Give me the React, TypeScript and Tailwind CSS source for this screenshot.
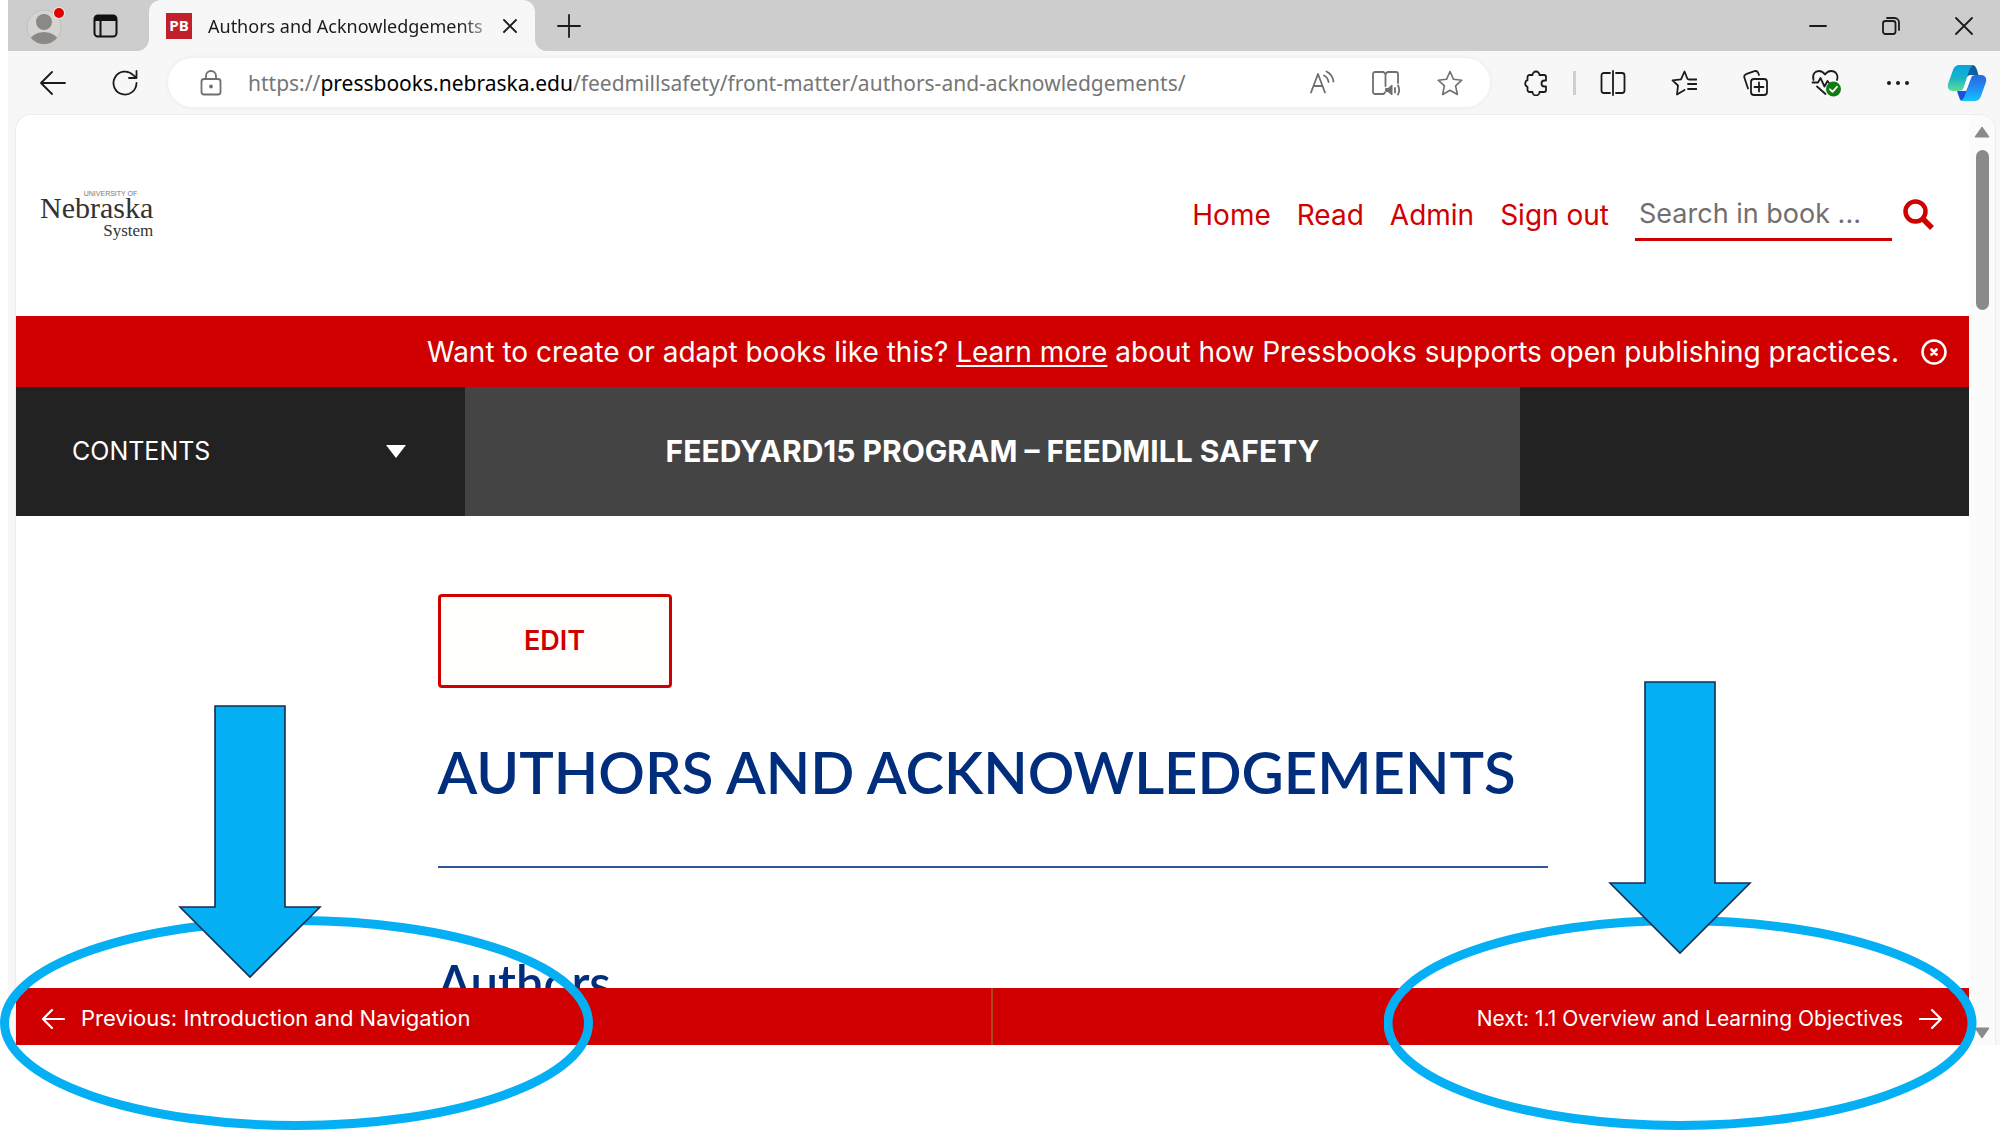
import React from 'react';

type IconProps = { children: React.ReactNode; className?: string; viewBox?: string };

function Icon({ children, className = 'h-[26px] w-[26px]', viewBox = '0 0 26 26' }: IconProps) {
  return (
    <svg
      viewBox={viewBox}
      className={className}
      fill="none"
      stroke="currentColor"
      strokeWidth="1.8"
      strokeLinecap="round"
      strokeLinejoin="round"
      aria-hidden="true"
    >
      {children}
    </svg>
  );
}

function IconButton({ label, className = '', children }: { label: string; className?: string; children: React.ReactNode }) {
  return (
    <button type="button" aria-label={label} className={`flex shrink-0 items-center justify-center ${className}`}>
      {children}
    </button>
  );
}

function TabStrip() {
  return (
    <div className="flex h-[51px] shrink-0 bg-[#f7f7f7] text-[#1b1b1b]">
      <div className="flex w-[141px] shrink-0 items-center gap-7 rounded-br-xl bg-[#cdcdcd] pl-[18px]">
        <button type="button" aria-label="Profile">
          <svg viewBox="0 0 39 38" className="h-[38px] w-[39px]" aria-hidden="true">
            <defs>
              <clipPath id="avatar">
                <circle cx="18" cy="20" r="17" />
              </clipPath>
            </defs>
            <circle cx="18" cy="20" r="17" fill="#d6d4d0" stroke="#c2c0bc" />
            <g clipPath="url(#avatar)" fill="#8b8886">
              <circle cx="18" cy="15" r="8" />
              <ellipse cx="18" cy="34" rx="14" ry="9" />
            </g>
            <circle cx="33" cy="6" r="6" fill="#f0e6e6" />
            <circle cx="33" cy="6" r="5" fill="#e00000" />
          </svg>
        </button>
        <button type="button" aria-label="Tab actions">
          <svg viewBox="0 0 25 24" className="h-6 w-[25px]" fill="none" stroke="#111" strokeWidth="2" aria-hidden="true">
            <rect x="1.5" y="1.5" width="22" height="21" rx="3.5" />
            <path d="M7.500 7v15" />
            <path d="M2 4.500h21" strokeWidth="5" />
          </svg>
        </button>
      </div>
      <div className="flex w-[386px] shrink-0 items-center bg-[#cdcdcd]">
        <div className="flex h-full w-full items-center rounded-t-xl bg-[#f7f7f7] pr-[18px] pl-[17px]">
          <span className="flex h-[26px] w-[26px] shrink-0 items-center justify-center bg-[#c0202b] font-['Open_Sans',sans-serif] text-[15px] font-bold text-white">
            PB
          </span>
          <span className="ml-4 w-[280px] shrink-0 overflow-hidden bg-linear-to-r from-[#1b1b1b] from-90% to-[#b8b8b8] bg-clip-text font-['Noto_Sans',sans-serif] text-[18px] leading-[26px] whitespace-nowrap text-transparent">
            Authors and Acknowledgements
          </span>
          <IconButton label="Close tab" className="ml-auto">
            <Icon className="h-[14px] w-[14px]" viewBox="0 0 14 14">
              <path d="M1 1l12 12M13 1L1 13" />
            </Icon>
          </IconButton>
        </div>
      </div>
      <div className="flex flex-1 items-center rounded-bl-xl bg-[#cdcdcd] pl-[22px]">
        <IconButton label="New tab">
          <Icon className="h-6 w-6" viewBox="0 0 24 24">
            <path d="M12 1v22M1 12h22" />
          </Icon>
        </IconButton>
        <div className="ml-auto flex">
          <IconButton label="Minimize" className="w-[73px]">
            <Icon className="h-[18px] w-[18px]" viewBox="0 0 18 18">
              <path d="M1 9h16" />
            </Icon>
          </IconButton>
          <IconButton label="Restore" className="w-[73px]">
            <Icon className="h-[18px] w-[18px]" viewBox="0 0 18 18">
              <rect x="1" y="4" width="12.500" height="13" rx="2.500" />
              <path d="M5 1h7.500a4.500 4.500 0 0 1 4.500 4.500V13" />
            </Icon>
          </IconButton>
          <IconButton label="Close window" className="w-[73px]">
            <Icon className="h-[18px] w-[18px]" viewBox="0 0 18 18">
              <path d="M1 1l16 16M17 1L1 17" />
            </Icon>
          </IconButton>
        </div>
      </div>
    </div>
  );
}

function AddressBar() {
  return (
    <div className="ml-2 flex h-[49px] min-w-0 flex-1 items-center rounded-full bg-white pr-2 pl-[30px] text-[#6f6f6f] shadow-[0_0_5px_rgba(0,0,0,0.07)]">
      <Icon className="h-[26px] w-[26px] shrink-0">
        <rect x="3.500" y="9" width="19" height="15.500" rx="2.500" />
        <path d="M8 9V6a5 5 0 0 1 10 0v3" />
        <circle cx="13" cy="16.500" r="1" fill="currentColor" />
      </Icon>
      <a href="#" className="ml-6 min-w-0 flex-1 truncate font-['Noto_Sans',sans-serif] text-[21px] leading-8 text-[#767676]">
        https://<span className="text-black">pressbooks.nebraska.edu</span>
        /feedmillsafety/front-matter/authors-and-acknowledgements/
      </a>
      <IconButton label="Read aloud" className="w-16">
        <Icon>
          <path d="M2 22.500L9 4l7 18.500M4.500 16h9" />
          <path d="M15 5.500q4 2 4.500 6.500M17.500 1.500q6 3 7 10" />
        </Icon>
      </IconButton>
      <IconButton label="Immersive reader" className="w-16">
        <Icon className="h-[26px] w-[30px]" viewBox="0 0 30 26">
          <path d="M14 22.500L12.500 24H4a2 2 0 0 1-2-2V4a2 2 0 0 1 2-2h8.500L14.500 4v12M14.500 4L16.500 2H25a2 2 0 0 1 2 2v9" />
          <path d="M15 18.500h2l4-3.500v10l-4-3.500h-2z" fill="currentColor" strokeWidth="1" />
          <path d="M24 18v4.500M27 15.500q2.500 4.500 0 9" />
        </Icon>
      </IconButton>
      <IconButton label="Add to favorites" className="w-16">
        <Icon>
          <path d="M13 1.500l3.500 7.800 8.300.9-6.200 5.700 1.800 8.600L13 20.200 5.600 24.500l1.800-8.600-6.200-5.700 8.300-.9z" strokeWidth="1.600" />
        </Icon>
      </IconButton>
    </div>
  );
}

function CopilotLogo() {
  return (
    <svg viewBox="0 0 40 38" className="h-[38px] w-10" aria-hidden="true">
      <defs>
        <linearGradient id="cp-left" x1="0" y1="0" x2="0" y2="1">
          <stop offset="0" stopColor="#06a3e6" />
          <stop offset="0.500" stopColor="#17b5c4" />
          <stop offset="1" stopColor="#5fdc96" />
        </linearGradient>
        <linearGradient id="cp-right" x1="0" y1="0" x2="0" y2="1">
          <stop offset="0" stopColor="#2767d8" />
          <stop offset="0.500" stopColor="#228cf5" />
          <stop offset="1" stopColor="#16c4fb" />
        </linearGradient>
      </defs>
      <path d="M22 1h3c3 0 4 2 5 5l1.500 5H25c-4 0-6 2-7 5l-4 2z" fill="#0b5f9c" />
      <path d="M10 27l2 6c1 3 2 4 5 4h3c3 0 4-2 5-5l3-12-6 4-3 3z" fill="#1b4fe0" />
      <path d="M13 1h14c-3 1-4 3-5 6l-5 16c-1 3-3 4-6 4H6c-4 0-6-3-5-7L6 6c1-3 3-5 7-5z" fill="url(#cp-left)" />
      <path d="M27 37H13c3-1 4-3 5-6l5-16c1-3 3-4 6-4h5c4 0 6 3 5 7l-5 14c-1 3-3 5-7 5z" fill="url(#cp-right)" />
      <path d="M25 11c-3 0-4.500 1.500-5.500 4.500L16 26c2.500 0 4-1 5-4l3.500-9z" fill="#fff" />
    </svg>
  );
}

function Toolbar() {
  return (
    <div className="flex h-[63px] shrink-0 items-center bg-[#f7f7f7] pl-[9px] text-[#1b1b1b]">
      <IconButton label="Back" className="h-12 w-[72px]">
        <Icon>
          <path d="M25 13H1M12 2L1 13l11 11" />
        </Icon>
      </IconButton>
      <IconButton label="Refresh" className="h-12 w-[71px]">
        <Icon>
          <path d="M24.500 13A11.500 11.500 0 1 1 21 4.800L24 7.500M24.500 1v7H17" />
        </Icon>
      </IconButton>
      <AddressBar />
      <IconButton label="Extensions" className="ml-[10px] h-12 w-[72px]">
        <Icon>
          <path d="M4.500 7A2 2 0 0 1 6.500 5H9.500a3.500 3.500 0 1 1 7 0H21a2 2 0 0 1 2 2v3.500h-1.500a3 3 0 1 0 0 6H23V20a2 2 0 0 1-2 2h-4.500a3.500 3.500 0 0 1-7 0h-3a2 2 0 0 1-2-2v-3.200a3.500 3.500 0 0 1 0-6.600z" />
        </Icon>
      </IconButton>
      <span className="mx-px h-6 w-[3px] bg-[#cfcfcf]" />
      <IconButton label="Split screen" className="h-12 w-[71px]">
        <Icon>
          <path d="M10 3H4a2.500 2.500 0 0 0-2.500 2.500v15A2.500 2.500 0 0 0 4 23h6M16 3h6a2.500 2.500 0 0 1 2.500 2.500v15A2.500 2.500 0 0 1 22 23h-6M13 1v24" />
        </Icon>
      </IconButton>
      <IconButton label="Favorites" className="h-12 w-[71px]">
        <Icon>
          <path d="M18 9.500L16.500 9 13.500 1.500 10 9.300l-8.500 1 5.500 5.200-1 9 7.500-4.500M18 9.500h7.500M17 14h8.500M17 19h8.500" />
        </Icon>
      </IconButton>
      <IconButton label="Collections" className="h-12 w-[71px]">
        <Icon>
          <rect x="9" y="9" width="16" height="16" rx="3" />
          <path d="M17 12.500v9M12.500 17h9M6 18.500L2.500 8A3 3 0 0 1 4 4.200l8.500-3A3 3 0 0 1 16 2.500L17 5" />
        </Icon>
      </IconButton>
      <IconButton label="Browser essentials" className="h-12 w-[72px]">
        <Icon className="h-[28px] w-[30px]" viewBox="0 0 30 28">
          <path d="M2.500 11C1 5 4 2 8 2q3.500 0 6 3.500Q16.500 2 20 2c5 0 7.500 4 6 9M1.500 13.500h5.500L9.500 9l4 8.500 3-5.500 1.500 2M6 17.500l8.500 7.500" />
          <circle cx="22.500" cy="20" r="7.500" fill="#107c10" stroke="none" />
          <path d="M19 20.300l2.500 2.500 4.500-5" stroke="#fff" />
        </Icon>
      </IconButton>
      <IconButton label="Settings and more" className="h-12 w-[71px]">
        <Icon>
          <g fill="currentColor" stroke="none">
            <circle cx="4" cy="13" r="2" />
            <circle cx="13" cy="13" r="2" />
            <circle cx="22" cy="13" r="2" />
          </g>
        </Icon>
      </IconButton>
      <IconButton label="Copilot" className="h-12 w-[67px]">
        <CopilotLogo />
      </IconButton>
    </div>
  );
}

function SiteHeader() {
  const links = ['Home', 'Read', 'Admin', 'Sign out'];
  return (
    <header className="flex h-[201px] shrink-0 items-center justify-between pr-[35px] pb-[2px] pl-6 text-[#d00000]">
      <a href="#" className="flex flex-col items-end font-['Liberation_Serif',serif] text-[#333]">
        <span className="mr-4 -mb-1 font-['Liberation_Sans',sans-serif] text-[7px] leading-[8px] whitespace-nowrap text-[#777]">
          UNIVERSITY OF
        </span>
        <span className="text-[30px] leading-7 font-medium">Nebraska</span>
        <span className="text-[17px] leading-[18px]">System</span>
      </a>
      <nav className="flex items-center gap-[26px]">
        {links.map((link) => (
          <a key={link} href="#" className="text-[28px] whitespace-nowrap">
            {link}
          </a>
        ))}
        <form className="flex items-center gap-[11px]">
          <input
            type="search"
            aria-label="Search in book"
            placeholder="Search in book ..."
            className="h-[52px] w-[257px] rounded-none border-b-3 border-[#d00000] bg-transparent px-1 text-[27px] outline-none placeholder:text-[#6f6f6f]"
          />
          <IconButton label="Search">
            <Icon className="h-[31px] w-[31px]" viewBox="0 0 31 31">
              <circle cx="12.500" cy="12.500" r="10" strokeWidth="4.500" />
              <path d="M20 20l9 9" strokeWidth="5.500" strokeLinecap="butt" />
            </Icon>
          </IconButton>
        </form>
      </nav>
    </header>
  );
}

function Banner() {
  return (
    <div className="flex h-[71px] shrink-0 items-center justify-end gap-[22px] bg-[#d00000] pr-[22px] text-white">
      <p className="text-[28px] leading-9">
        Want to create or adapt books like this?{' '}
        <a href="#" className="underline decoration-2 underline-offset-3">
          Learn more
        </a>{' '}
        about how Pressbooks supports open publishing practices.
      </p>
      <IconButton label="Dismiss">
        <Icon>
          <circle cx="13" cy="13" r="11.500" strokeWidth="2.500" />
          <path d="M10.500 10.500l5 5M15.500 10.500l-5 5" strokeWidth="2.800" />
        </Icon>
      </IconButton>
    </div>
  );
}

function BookBar() {
  return (
    <div className="grid h-[129px] shrink-0 grid-cols-[23fr_54fr_23fr] bg-[#222] text-white">
      <button type="button" className="flex items-center justify-between pr-[59px] pl-14 text-[25px]">
        CONTENTS
        <svg viewBox="0 0 20 13" className="h-[13px] w-5" aria-hidden="true">
          <path d="M0 0h20L10 13z" fill="#fff" />
        </svg>
      </button>
      <div className="flex items-center justify-center bg-[#444]">
        <h2 className="text-[30px] font-bold">
          <a href="#">FEEDYARD15 PROGRAM – FEEDMILL SAFETY</a>
        </h2>
      </div>
    </div>
  );
}

function Article() {
  return (
    <main className="min-h-0 flex-1 overflow-hidden">
      <article className="mx-auto w-[1110px] max-w-full pt-[78px] font-['Lato',sans-serif] text-[#002e7d]">
        <a
          href="#"
          className="flex h-[94px] w-[234px] items-center justify-center rounded-sm border-3 border-[#d00000] bg-[#fffefa] font-['Inter',sans-serif] text-[27px] font-semibold text-[#d00000]"
        >
          EDIT
        </a>
        <h1 className="mt-[49px] text-[58px] leading-[70px] font-semibold whitespace-nowrap">AUTHORS AND ACKNOWLEDGEMENTS</h1>
        <hr className="mt-[59px] border-t-2 border-[#30569b]" />
        <h2 className="mt-[84px] text-[49px] leading-[60px] font-semibold">Authors</h2>
      </article>
    </main>
  );
}

function PageNav() {
  return (
    <nav className="grid h-[57px] shrink-0 grid-cols-2 bg-[#d00000] text-white">
      <a href="#" className="flex items-center gap-4 border-r-2 border-[#ab4a10] pt-1 pl-[25px] text-[22px]">
        <Icon className="h-5 w-6" viewBox="0 0 24 20">
          <path d="M23 10H2M11 1L2 10l9 9" strokeWidth="2.200" />
        </Icon>
        Previous: Introduction and Navigation
      </a>
      <a href="#" className="flex items-center justify-end gap-4 pt-1 pr-[26px] text-[21px]">
        Next: 1.1 Overview and Learning Objectives
        <Icon className="h-5 w-6" viewBox="0 0 24 20">
          <path d="M1 10h21M13 1l9 9-9 9" strokeWidth="2.200" />
        </Icon>
      </a>
    </nav>
  );
}

function Scrollbar() {
  return (
    <div className="flex w-[26px] shrink-0 flex-col items-center bg-[#fbfbfb] pt-[11px] pb-[6px]" aria-hidden="true">
      <svg viewBox="0 0 16 12" className="h-3 w-4">
        <path d="M8 1l7 10H1z" fill="#8a8a8a" stroke="#8a8a8a" strokeLinejoin="round" />
      </svg>
      <span className="mt-3 h-[160px] w-[13px] rounded-full bg-[#8a8a8a]" />
      <svg viewBox="0 0 16 12" className="mt-auto h-3 w-4">
        <path d="M1 1h14L8 11z" fill="#8a8a8a" stroke="#8a8a8a" strokeLinejoin="round" />
      </svg>
    </div>
  );
}

function Annotations() {
  return (
    <>
      <svg viewBox="0 0 594 428" className="pointer-events-none absolute bottom-0 left-0 h-[428px] w-[594px]" aria-hidden="true">
        <ellipse cx="296.500" cy="321" rx="292" ry="102.500" fill="none" stroke="#04b0f3" strokeWidth="9" />
        <path d="M215 4h70v201h35L250 275 180 205h35z" fill="#04b0f3" stroke="#172c51" strokeWidth="1.600" />
      </svg>
      <svg viewBox="0 0 594 452" className="pointer-events-none absolute right-[22px] bottom-0 h-[452px] w-[594px]" aria-hidden="true">
        <ellipse cx="296" cy="345" rx="292" ry="102.500" fill="none" stroke="#04b0f3" strokeWidth="9" />
        <path d="M261 4h70v201h35L296 275 226 205h35z" fill="#04b0f3" stroke="#172c51" strokeWidth="1.600" />
      </svg>
    </>
  );
}

export default function App() {
  return (
    <div className="relative flex h-screen flex-col overflow-hidden bg-white pb-[85px] pl-2 font-['Inter',sans-serif]">
      <TabStrip />
      <Toolbar />
      <div className="flex min-h-0 flex-1 bg-[#f7f7f7] pr-1 pl-[7px]">
        <div className="flex min-w-0 flex-1 overflow-hidden rounded-t-2xl border-x border-t border-[#ececec] bg-white">
          <div className="flex min-w-0 flex-1 flex-col">
            <SiteHeader />
            <Banner />
            <BookBar />
            <Article />
            <PageNav />
          </div>
          <Scrollbar />
        </div>
      </div>
      <Annotations />
    </div>
  );
}
